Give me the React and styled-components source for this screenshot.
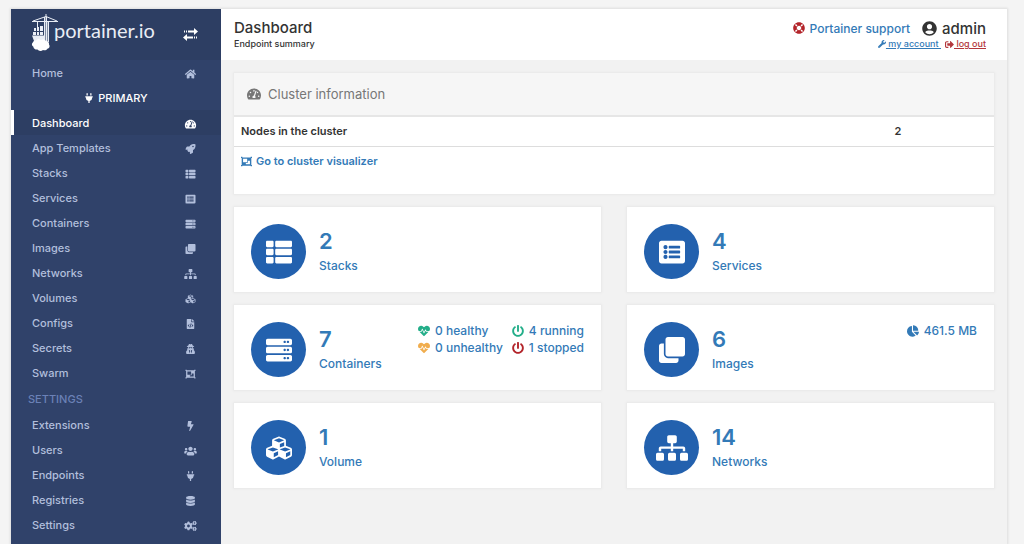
import React from "react";
import styled, { createGlobalStyle } from "styled-components";
import {
  FaHome, FaPlug, FaTachometerAlt, FaRocket, FaThList, FaListAlt, FaServer, FaClone,
  FaSitemap, FaCubes, FaFileCode, FaUserSecret, FaObjectGroup, FaBolt, FaUsers,
  FaDatabase, FaCogs, FaLifeRing, FaUserCircle, FaWrench, FaSignOutAlt, FaHeartbeat,
  FaPowerOff, FaChartPie,
} from "react-icons/fa";

const GlobalStyle = createGlobalStyle`
  *, *::before, *::after { box-sizing: border-box; }
  body {
    margin: 0;
    background: #f4f4f4;
    color: #333;
    font-family: "Inter", "Liberation Sans", sans-serif;
    font-size: 12px;
    font-weight: 500;
  }
  a { color: #337ab7; text-decoration: none; }
  h1, h2, ul, p { margin: 0; padding: 0; }
  svg { display: block; flex: none; }
`;

const Page = styled.div`
  display: flex;
  min-height: calc(100vh - 9px);
  margin: 9px 17px 0 11px;
  background: #f2f2f2;
  box-shadow: 0 0 2px 1px #dedede;
`;

const Sidebar = styled.aside`
  flex: 0 0 210px;
  background: #30426a;
`;

const Brand = styled.div`
  display: flex;
  align-items: center;
  justify-content: space-between;
  height: 51px;
  padding: 0 23px 0 20px;
  background: #2d3e63;
`;

const LogoLink = styled.a`
  display: flex;
  align-items: center;
  padding-bottom: 4px;
  color: #e9edf5;
  font: 400 20px/24px "Lato", sans-serif;
`;

const Wordmark = styled.span`
  margin-left: -5px;
  padding-bottom: 5px;
`;

const ToggleButton = styled.button`
  padding: 0;
  border: 0;
  background: none;
  color: #fff;
  cursor: pointer;
`;

const Nav = styled.nav`
  display: flex;
  flex-direction: column;
`;

const NavList = styled.ul`
  list-style: none;
`;

const NavItem = styled.a`
  display: flex;
  align-items: center;
  height: 25px;
  padding-right: 22px;
  padding-left: 18px;
  border-left: 3px solid ${(p) => (p.$active ? "#fff" : "transparent")};
  background: ${(p) => (p.$active ? "#2d3e63" : "transparent")};
  color: ${(p) => (p.$active ? "#fff" : "#b2bfdc")};
  font-size: 11px;
`;

const NavLabel = styled.span`
  flex: 1;
`;

const NavIcon = styled.span`
  display: flex;
  justify-content: center;
  width: 18px;
  padding-top: 2px;
  svg { width: 13px; height: 10px; }
`;

const EndpointName = styled.div`
  display: flex;
  align-items: center;
  justify-content: center;
  gap: 4px;
  height: 25px;
  color: #fff;
  font-size: 11px;
`;

const NavHeading = styled.h2`
  margin-top: 2px;
  padding-left: 17px;
  color: #6b81b6;
  font-size: 11px;
  font-weight: 500;
  line-height: 25px;
`;

const Content = styled.div`
  flex: 1;
  min-width: 0;
`;

const Header = styled.header`
  display: flex;
  justify-content: space-between;
  height: 51px;
  padding: 9px 21px 0 13px;
  background: #fff;
`;

const Title = styled.h1`
  font-size: 15px;
  font-weight: 500;
  line-height: 20px;
`;

const Subtitle = styled.p`
  font-size: 9px;
  line-height: 12px;
`;

const UserArea = styled.div`
  display: flex;
  flex-direction: column;
  align-items: flex-end;
`;

const UserRow = styled.div`
  display: flex;
  align-items: center;
  gap: 12px;
  height: 20px;
`;

const Support = styled.a`
  display: flex;
  align-items: center;
  gap: 5px;
  font-size: 12px;
  svg { color: #b3242a; }
`;

const UserName = styled.span`
  display: flex;
  align-items: center;
  gap: 5px;
  font-size: 15px;
`;

const AccountRow = styled.div`
  display: flex;
  gap: 4px;
  height: 12px;
`;

const AccountLink = styled.a`
  display: flex;
  align-items: center;
  color: ${(p) => (p.$danger ? "#b3363b" : "#337ab7")};
  font-size: 9px;
  line-height: 12px;
  span { text-decoration: underline; text-underline-offset: 1px; }
`;

const Main = styled.main`
  display: flex;
  flex-direction: column;
  gap: 13px;
  padding: 13px;
`;

const Panel = styled.section`
  background: #fff;
  box-shadow: 0 0 2px 1px #e8e8e8;
`;

const PanelHeader = styled.h2`
  display: flex;
  align-items: center;
  gap: 7px;
  height: 44px;
  padding-left: 13px;
  border-bottom: 2px solid #e6e6e6;
  background: #f6f6f6;
  color: #777;
  font-size: 13px;
  font-weight: 400;
`;

const InfoTable = styled.table`
  width: 100%;
  border-collapse: collapse;
  font-size: 11px;
  font-weight: 600;
  line-height: 15px;
  th, td { padding: 7px; text-align: left; }
  th { width: 86%; font-weight: 600; }
  tr + tr td { padding-bottom: 25px; border-top: 1px solid #ddd; }
`;

const VisualizerLink = styled.a`
  display: flex;
  align-items: center;
  gap: 4px;
`;

const CardGrid = styled.div`
  display: grid;
  grid-template-columns: 1fr 1fr;
  gap: 13px 26px;
`;

const Card = styled.a`
  display: flex;
  align-items: flex-start;
  height: 85px;
  padding: 17px;
  background: #fff;
  box-shadow: 0 0 2px 1px #e8e8e8;
`;

const IconCircle = styled.span`
  display: flex;
  align-items: center;
  justify-content: center;
  flex: none;
  width: 55px;
  height: 55px;
  margin-right: 13px;
  border-radius: 50%;
  background: #2361ae;
  color: #fff;
  svg { width: 32px; height: 26px; }
`;

const Figure = styled.span`
  display: flex;
  flex-direction: column;
  flex: 1;
  padding-top: 3px;
`;

const Count = styled.span`
  font-size: 22px;
  font-weight: 600;
  line-height: 28px;
`;

const CardLabel = styled.span`
  font-size: 12px;
  line-height: 22px;
`;

const StatGrid = styled.span`
  display: grid;
  grid-template-columns: repeat(${(p) => p.$columns}, auto);
  column-gap: 9px;
`;

const Stat = styled.span`
  display: flex;
  align-items: center;
  gap: 5px;
  font-size: 12px;
  line-height: 17px;
  svg { color: ${(p) => p.$tone}; }
`;

function CraneMark() {
  return (
    <svg width="28" height="38" viewBox="0 0 28 38" fill="currentColor" aria-hidden="true">
      <path d="M1 7.500h26M15 0v7M2 7 15 2.500 26 7" fill="none" stroke="currentColor" strokeWidth="1" />
      <path d="M13 3h1v24h-1zM15 3h1v24h-1zM17 8h1v20h-1z" />
      <path d="M14 8h3v20h-3z" opacity=".45" />
      <path d="M6 8h1v5H6z" />
      <path d="M3 14h2v3H3zM6 13h2v4H6zM9 12h3v5H9zM2 18h3v3H2zM6 18h2v3H6zM9 18h3v3H9zM1 21.500h12V27H3z" />
      <path d="M5 26.500c1.500-1.500 3.500-1.400 4.600-.4 1.700-1.200 4.100-.8 5.200.6 2.300.2 3.600 1.900 3.200 3.800 1.300 1.800.3 3.800-1.600 4.300-1.100 1.600-3 1.800-4.400 1.100-1.500 1.500-4.400 1.300-5.500-.3-2.300.2-4-1.100-4.100-2.900-1.900-.9-1.900-3.700-.4-4.500.4-1.200 1.600-1.900 3-1.700z" fill="#fff" />
    </svg>
  );
}

function TransferIcon() {
  return (
    <svg width="15" height="13" viewBox="0 0 15 13" fill="currentColor" aria-hidden="true">
      <path d="M11 0l4 3.500L11 7V4.500H5v-2h6zM1 2.500h1v2H1zM3 2.500h1v2H3z" />
      <path d="M4 6v2.500h6v2H4V13L0 9.500zM11 8.500h1v2h-1zM13 8.500h1v2h-1z" />
    </svg>
  );
}

const endpointLinks = [
  ["Dashboard", FaTachometerAlt],
  ["App Templates", FaRocket],
  ["Stacks", FaThList],
  ["Services", FaListAlt],
  ["Containers", FaServer],
  ["Images", FaClone],
  ["Networks", FaSitemap],
  ["Volumes", FaCubes],
  ["Configs", FaFileCode],
  ["Secrets", FaUserSecret],
  ["Swarm", FaObjectGroup],
];

const settingsLinks = [
  ["Extensions", FaBolt],
  ["Users", FaUsers],
  ["Endpoints", FaPlug],
  ["Registries", FaDatabase],
  ["Settings", FaCogs],
];

function NavLinks({ links, active }) {
  return (
    <NavList>
      {links.map(([label, Icon]) => (
        <li key={label}>
          <NavItem href="#" $active={label === active} aria-current={label === active ? "page" : undefined}>
            <NavLabel>{label}</NavLabel>
            <NavIcon><Icon /></NavIcon>
          </NavItem>
        </li>
      ))}
    </NavList>
  );
}

function SummaryCard({ icon: Icon, count, label, children }) {
  return (
    <Card href="#">
      <IconCircle><Icon /></IconCircle>
      <Figure>
        <Count>{count}</Count>
        <CardLabel>{label}</CardLabel>
      </Figure>
      {children}
    </Card>
  );
}

export default function App() {
  return (
    <>
      <GlobalStyle />
      <Page>
        <Sidebar>
          <Brand>
            <LogoLink href="#"><CraneMark /><Wordmark>portainer.io</Wordmark></LogoLink>
            <ToggleButton type="button" aria-label="Toggle sidebar"><TransferIcon /></ToggleButton>
          </Brand>
          <Nav>
            <NavLinks links={[["Home", FaHome]]} />
            <EndpointName><FaPlug size={10} />PRIMARY</EndpointName>
            <NavLinks links={endpointLinks} active="Dashboard" />
            <NavHeading>SETTINGS</NavHeading>
            <NavLinks links={settingsLinks} />
          </Nav>
        </Sidebar>
        <Content>
          <Header>
            <div>
              <Title>Dashboard</Title>
              <Subtitle>Endpoint summary</Subtitle>
            </div>
            <UserArea>
              <UserRow>
                <Support href="#"><FaLifeRing size={12} />Portainer support</Support>
                <UserName><FaUserCircle size={15} />admin</UserName>
              </UserRow>
              <AccountRow>
                <AccountLink href="#"><FaWrench size={8} /><span>&nbsp;my account&nbsp;</span></AccountLink>
                <AccountLink href="#" $danger><FaSignOutAlt size={9} /><span>&nbsp;log out</span></AccountLink>
              </AccountRow>
            </UserArea>
          </Header>
          <Main>
            <Panel>
              <PanelHeader><FaTachometerAlt size={14} />Cluster information</PanelHeader>
              <InfoTable>
                <tbody>
                  <tr><th scope="row">Nodes in the cluster</th><td>2</td></tr>
                  <tr>
                    <td colSpan={2}>
                      <VisualizerLink href="#"><FaObjectGroup size={11} />Go to cluster visualizer</VisualizerLink>
                    </td>
                  </tr>
                </tbody>
              </InfoTable>
            </Panel>
            <CardGrid>
              <SummaryCard icon={FaThList} count="2" label="Stacks" />
              <SummaryCard icon={FaListAlt} count="4" label="Services" />
              <SummaryCard icon={FaServer} count="7" label="Containers">
                <StatGrid $columns={2}>
                  <Stat $tone="#23ae89"><FaHeartbeat size={12} />0 healthy</Stat>
                  <Stat $tone="#23ae89"><FaPowerOff size={12} />4 running</Stat>
                  <Stat $tone="#f0ad4e"><FaHeartbeat size={12} />0 unhealthy</Stat>
                  <Stat $tone="#b3242a"><FaPowerOff size={12} />1 stopped</Stat>
                </StatGrid>
              </SummaryCard>
              <SummaryCard icon={FaClone} count="6" label="Images">
                <StatGrid $columns={1}>
                  <Stat $tone="#337ab7"><FaChartPie size={12} />461.5 MB</Stat>
                </StatGrid>
              </SummaryCard>
              <SummaryCard icon={FaCubes} count="1" label="Volume" />
              <SummaryCard icon={FaSitemap} count="14" label="Networks" />
            </CardGrid>
          </Main>
        </Content>
      </Page>
    </>
  );
}
